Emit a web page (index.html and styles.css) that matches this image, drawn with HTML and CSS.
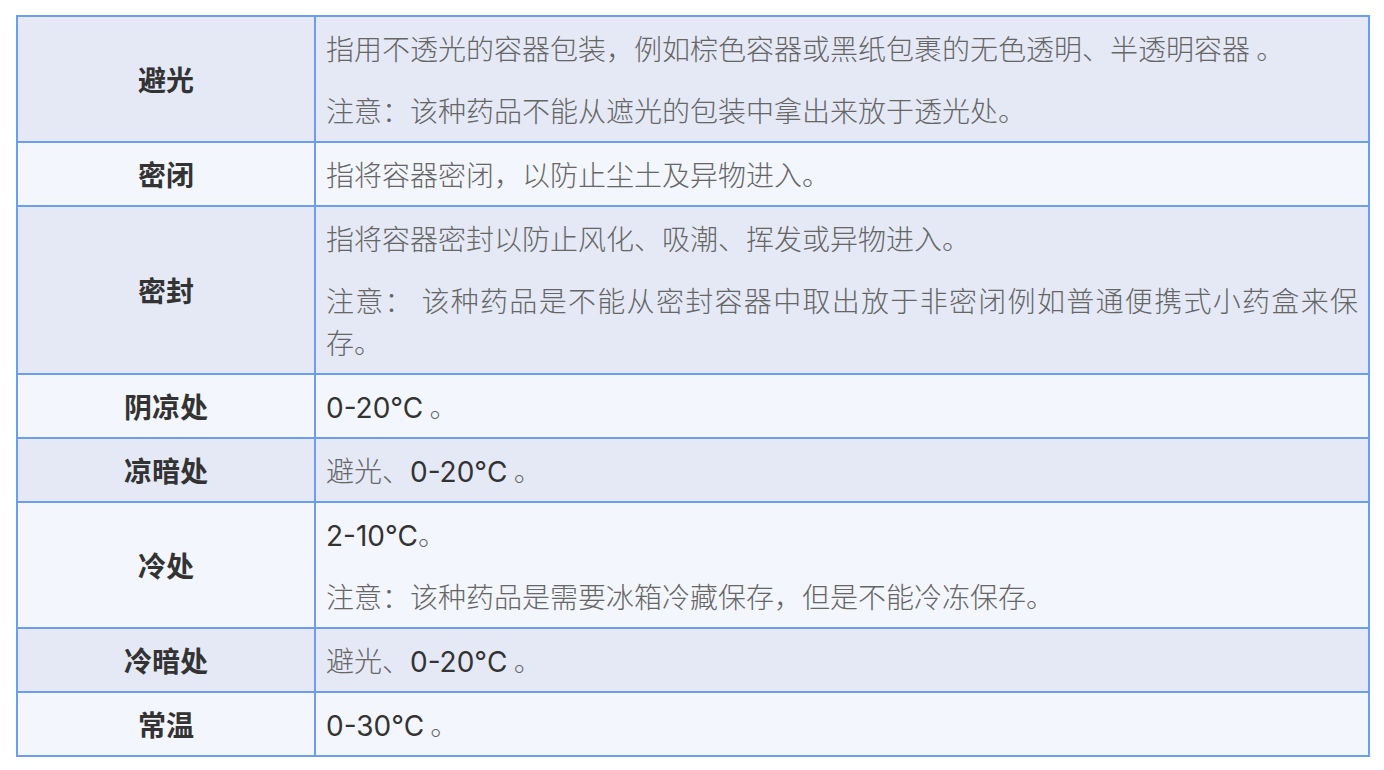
FILE: index.html
```html
<!DOCTYPE html>
<html lang="zh-CN">
<head>
<meta charset="utf-8">
<title>药品储存条件</title>
<link rel="stylesheet" href="styles.css">
</head>
<body>
<div class="wrap">
<table class="storage">
  <colgroup><col class="c-label"><col class="c-desc"></colgroup>
  <tbody>
    <tr class="odd">
      <td class="label">避光</td>
      <td class="desc">
        <p>指用不透光的容器包装，例如棕色容器或黑纸包裹的无色透明、半透明容器 。</p>
        <p>注意：该种药品不能从遮光的包装中拿出来放于透光处。</p>
      </td>
    </tr>
    <tr class="even">
      <td class="label">密闭</td>
      <td class="desc"><p>指将容器密闭，以防止尘土及异物进入。</p></td>
    </tr>
    <tr class="odd">
      <td class="label">密封</td>
      <td class="desc">
        <p>指将容器密封以防止风化、吸潮、挥发或异物进入。</p>
        <p>注意： 该种药品是不能从密封容器中取出放于非密闭例如普通便携式小药盒来保存。</p>
      </td>
    </tr>
    <tr class="even">
      <td class="label">阴凉处</td>
      <td class="desc"><p><span class="num">0-20°C</span> 。</p></td>
    </tr>
    <tr class="odd">
      <td class="label">凉暗处</td>
      <td class="desc"><p>避光、<span class="num">0-20°C</span> 。</p></td>
    </tr>
    <tr class="even">
      <td class="label">冷处</td>
      <td class="desc">
        <p><span class="num">2-10°C</span>。</p>
        <p>注意：该种药品是需要冰箱冷藏保存，但是不能冷冻保存。</p>
      </td>
    </tr>
    <tr class="odd">
      <td class="label">冷暗处</td>
      <td class="desc"><p>避光、<span class="num">0-20°C</span> 。</p></td>
    </tr>
    <tr class="even">
      <td class="label">常温</td>
      <td class="desc"><p><span class="num">0-30°C</span> 。</p></td>
    </tr>
  </tbody>
</table>
</div>
</body>
</html>
```

FILE: styles.css
```css
html, body {
  margin: 0;
  padding: 0;
  background: #ffffff;
}

.wrap {
  padding: 15px 14px 0 16px;
}

.storage {
  width: 1354px;
  table-layout: fixed;
  border-collapse: separate;
  border-spacing: 0;
  border-top: 2px solid #6d9eeb;
  border-left: 2px solid #6d9eeb;
  font-family: "Noto Sans CJK SC", "Noto Sans", sans-serif;
  font-size: 28px;
  line-height: 42px;
}

.c-label { width: 298px; }

.storage td {
  border-right: 2px solid #6d9eeb;
  border-bottom: 2px solid #6d9eeb;
  padding: 10px 10px;
  vertical-align: middle;
}

.odd td { background: #e5e9f6; }
.even td { background: #f3f6fc; }

.label {
  text-align: center;
  font-weight: 700;
  color: #333333;
}

.desc {
  color: #666666;
  font-weight: 300;
  text-align: justify;
}

.desc p {
  margin: 0;
}

.desc p + p {
  margin-top: 20px;
}

.num {
  font-family: "Inter", "Liberation Sans", sans-serif;
  font-weight: 400;
  color: #333333;
  line-height: 1;
}
```
